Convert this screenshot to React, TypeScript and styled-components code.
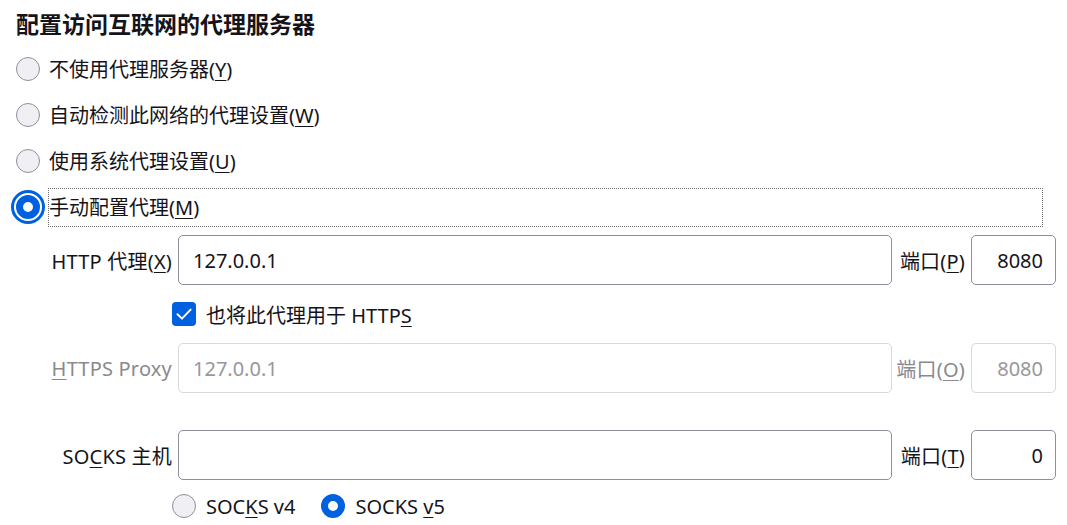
import styled, { createGlobalStyle } from "styled-components";

const GlobalStyle = createGlobalStyle`
  html, body {
    margin: 0;
    padding: 0;
    background: #ffffff;
  }
  body {
    font-family: "Noto Sans", "Noto Sans CJK SC", sans-serif;
    color: #15141a;
  }
`;

const Page = styled.div`
  width: 1067px;
  height: 525px;
  box-sizing: border-box;
  padding: 9px 11px 0 16px;
  overflow: hidden;
`;

const Title = styled.h2`
  margin: 0;
  font-size: 23px;
  line-height: 30px;
  font-weight: 700;
`;

const Options = styled.div`
  display: flex;
  flex-direction: column;
  gap: 6px;
  margin-top: 10px;
`;

const RadioRow = styled.div`
  display: flex;
  align-items: center;
  gap: 8px;
  height: 40px;
`;

const Radio = styled.span<{ $checked?: boolean; $focused?: boolean }>`
  flex: none;
  width: 24px;
  height: 24px;
  box-sizing: border-box;
  border-radius: 50%;
  background: ${(p) => (p.$checked ? "#fafafa" : "#f0f0f4")};
  border: ${(p) => (p.$checked ? "7px solid #0061e0" : "1px solid #8f8f9d")};
  outline: ${(p) => (p.$focused ? "3px solid #0061e0" : "none")};
  outline-offset: 2px;
`;

const RadioLabel = styled.span<{ $focused?: boolean }>`
  display: flex;
  align-items: center;
  font-size: 20px;
  line-height: 37px;
  border: 1px ${(p) => (p.$focused ? "dotted #6b6b6b" : "solid transparent")};
  flex: ${(p) => (p.$focused ? "1" : "none")};
  margin-right: ${(p) => (p.$focused ? "13px" : "0")};
`;

const Key = styled.u`
  text-decoration-thickness: 1px;
  text-underline-offset: 3px;
`;

const Proxy = styled.div`
  display: flex;
  flex-direction: column;
  margin-top: 8px;
  padding-left: 33px;
`;

const FieldRow = styled.div<{ $gapAfter?: number }>`
  display: grid;
  grid-template-columns: 123px 1fr 67px 85px;
  column-gap: 6px;
  align-items: center;
  height: 50px;
  margin-bottom: ${(p) => p.$gapAfter ?? 0}px;
`;

const FieldLabel = styled.span<{ $disabled?: boolean }>`
  justify-self: end;
  font-size: 20px;
  white-space: nowrap;
  letter-spacing: 0.2px;
  color: ${(p) => (p.$disabled ? "#8a898e" : "#15141a")};
`;

const TextBox = styled.div<{ $disabled?: boolean; $right?: boolean }>`
  height: 50px;
  box-sizing: border-box;
  border: 1px solid ${(p) => (p.$disabled ? "#d8d8de" : "#8f8f9d")};
  border-radius: 5px;
  display: flex;
  align-items: center;
  justify-content: ${(p) => (p.$right ? "flex-end" : "flex-start")};
  padding: ${(p) => (p.$right ? "0 12px 0 0" : "0 0 0 14px")};
  font-size: 20px;
  color: ${(p) => (p.$disabled ? "#98979c" : "#15141a")};
`;

const CheckRow = styled.div`
  display: flex;
  align-items: center;
  gap: 10px;
  height: 58px;
  padding-left: 123px;
  font-size: 20px;
`;

const CheckBox = styled.span`
  flex: none;
  width: 24px;
  height: 24px;
  border-radius: 4px;
  background: #0061e0;
  display: flex;
  align-items: center;
  justify-content: center;
`;

const VersionRow = styled.div`
  display: flex;
  align-items: center;
  height: 52px;
  padding-left: 123px;
  font-size: 20px;
`;

const Version = styled.span`
  display: flex;
  align-items: center;
  gap: 10px;
  margin-right: 26px;
`;

export default function App() {
  return (
    <>
      <GlobalStyle />
      <Page>
        <Title>配置访问互联网的代理服务器</Title>
        <Options>
          <RadioRow>
            <Radio />
            <RadioLabel>
              不使用代理服务器(<Key>Y</Key>)
            </RadioLabel>
          </RadioRow>
          <RadioRow>
            <Radio />
            <RadioLabel>
              自动检测此网络的代理设置(<Key>W</Key>)
            </RadioLabel>
          </RadioRow>
          <RadioRow>
            <Radio />
            <RadioLabel>
              使用系统代理设置(<Key>U</Key>)
            </RadioLabel>
          </RadioRow>
          <RadioRow>
            <Radio $checked $focused />
            <RadioLabel $focused>
              手动配置代理(<Key>M</Key>)
            </RadioLabel>
          </RadioRow>
        </Options>

        <Proxy>
          <FieldRow>
            <FieldLabel>
              HTTP 代理(<Key>X</Key>)
            </FieldLabel>
            <TextBox>127.0.0.1</TextBox>
            <FieldLabel>
              端口(<Key>P</Key>)
            </FieldLabel>
            <TextBox $right>8080</TextBox>
          </FieldRow>

          <CheckRow>
            <CheckBox>
              <svg width="18" height="18" viewBox="0 0 18 18" fill="none">
                <path d="M2.5 9.2 L7 13.6 L15.6 4.6" stroke="#ffffff" strokeWidth="2" strokeLinecap="round" strokeLinejoin="round" />
              </svg>
            </CheckBox>
            <span>
              也将此代理用于 HTTP<Key>S</Key>
            </span>
          </CheckRow>

          <FieldRow $gapAfter={37}>
            <FieldLabel $disabled>
              <Key>H</Key>TTPS Proxy
            </FieldLabel>
            <TextBox $disabled>127.0.0.1</TextBox>
            <FieldLabel $disabled>
              端口(<Key>O</Key>)
            </FieldLabel>
            <TextBox $disabled $right>8080</TextBox>
          </FieldRow>

          <FieldRow>
            <FieldLabel>
              SO<Key>C</Key>KS 主机
            </FieldLabel>
            <TextBox />
            <FieldLabel>
              端口(<Key>T</Key>)
            </FieldLabel>
            <TextBox $right>0</TextBox>
          </FieldRow>

          <VersionRow>
            <Version>
              <Radio />
              <span>
                SOC<Key>K</Key>S v4
              </span>
            </Version>
            <Version>
              <Radio $checked />
              <span>
                SOCKS <Key>v</Key>5
              </span>
            </Version>
          </VersionRow>
        </Proxy>
      </Page>
    </>
  );
}
